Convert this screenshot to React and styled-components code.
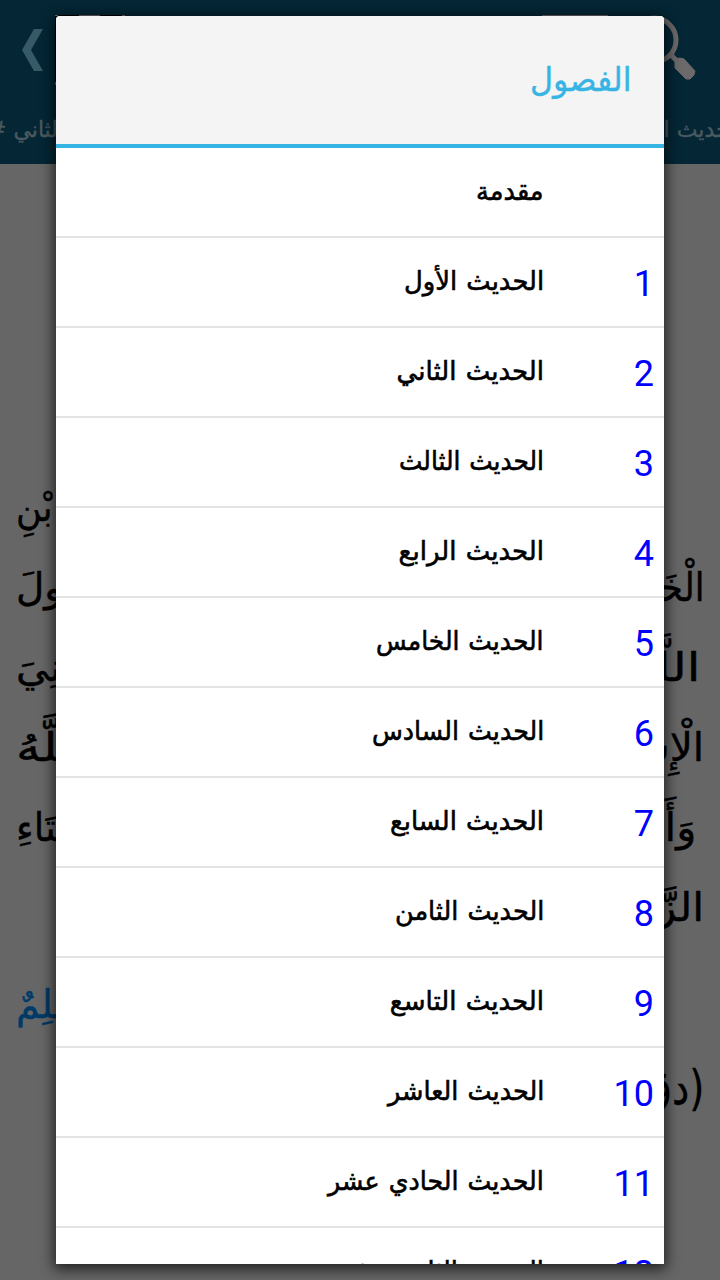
import React, {useLayoutEffect, useRef, useState} from 'react';
import styled, {createGlobalStyle} from 'styled-components';

const GlobalStyle = createGlobalStyle`
body {
  margin: 0;
  background: #666666;
  font-family: 'DejaVu Sans', sans-serif;
}
* {
  box-sizing: border-box;
}
`

const Screen = styled.div`
position: relative;
width: 720px;
height: 1280px;
overflow: hidden;
background: #666666;
`

const TopBar = styled.header`
height: 164px;
background: #042635;
display: flex;
flex-direction: column;
`

const Actions = styled.div`
height: 100px;
display: flex;
justify-content: space-between;
`

const Tabs = styled.div`
direction: rtl;
height: 64px;
display: flex;
justify-content: space-between;
align-items: center;
color: #4b5a60;
font-size: 22px;
-webkit-text-stroke: 0.4px #4b5a60;
white-space: nowrap;
margin: -3px -23px 0 -12px;
`

const Article = styled.main`
direction: rtl;
padding: 304px 16px 0;
display: flex;
flex-direction: column;
`

const Line = styled.p`
margin: ${p => p.$top || 0}px 0 0;
padding-right: ${p => p.$indent || 0}px;
height: 80px;
line-height: 80px;
font-size: ${p => p.$size || 39}px;
color: ${p => p.$color || '#000000'};
-webkit-text-stroke: 0.4px ${p => p.$color || '#000000'};
display: flex;
justify-content: space-between;
white-space: nowrap;
`

const Dialog = styled.section`
position: absolute;
top: 16px;
left: 56px;
width: 608px;
height: 1248px;
overflow: hidden;
border-radius: 4px 4px 0 0;
background: #ffffff;
box-shadow: 0 3px 14px 2px rgba(0, 0, 0, 0.7);
display: flex;
flex-direction: column;
direction: rtl;
`

const DialogHead = styled.div`
flex: none;
height: 132px;
padding: 0 32px 2px;
display: flex;
align-items: center;
background: #f4f4f4;
border-bottom: 4px solid #36b5e5;
color: #36b5e5;
font-size: 33px;
-webkit-text-stroke: 0.4px #36b5e5;
`

const List = styled.ul`
list-style: none;
margin: 0;
padding: 0;
`

const Row = styled.li`
height: 90px;
display: flex;
align-items: center;
border-bottom: 2px solid #e4e4e4;
`

const Num = styled.span`
width: 120px;
padding: 3px 10px 0 0;
font-family: Roboto, sans-serif;
font-size: 36px;
line-height: 42px;
color: #0000ff;
`

const Title = styled.span`
font-size: 26px;
line-height: 40px;
padding: 0 0 2px 0;
word-spacing: 1px;
color: #000000;
-webkit-text-stroke: 0.6px #000000;
`

const Fit = styled.span`
display: inline-block;
white-space: nowrap;
`

// squeezes a word horizontally to the given width
function FitText({width, left, children}) {
    const ref = useRef(null);
    const [scale, setScale] = useState(1);
    useLayoutEffect(() => {
        setScale(width / ref.current.offsetWidth);
    }, [width]);
    return (
        <Fit ref={ref} style={{transform: `scaleX(${scale})`, transformOrigin: left ? 'left center' : 'right center'}}>
            {children}
        </Fit>
    )
}

const chapters = [
    {title: 'مقدمة', width: 68},
    {title: 'الحديث الأول', width: 140},
    {title: 'الحديث الثاني', width: 147},
    {title: 'الحديث الثالث', width: 145},
    {title: 'الحديث الرابع', width: 145},
    {title: 'الحديث الخامس', width: 168},
    {title: 'الحديث السادس', width: 172},
    {title: 'الحديث السابع', width: 154},
    {title: 'الحديث الثامن', width: 149},
    {title: 'الحديث التاسع', width: 154},
    {title: 'الحديث العاشر', width: 156},
    {title: 'الحديث الحادي عشر', width: 216},
    {title: 'الحديث الثاني عشر', width: 206},
]

const lines = [
    {start: '', end: 'بْنِ', endWidth: 37},
    {start: 'الْخَطَّابِ', startWidth: 116, end: 'ولَ', endWidth: 47},
    {start: 'اللَّهِ', startWidth: 72, end: 'بُنِيَ', endWidth: 58, indent: 3},
    {start: 'الْإِسْلَامُ', startWidth: 118, end: 'اللَّهُ', endWidth: 72},
    {start: 'وَأَنَّ', startWidth: 62, end: 'وَإِيتَاءِ', endWidth: 80, indent: 8},
    {start: 'الزَّكَاةِ', startWidth: 104, end: ''},
    {start: '', end: 'وَمُسْلِمٌ', endWidth: 110, color: '#003a66', top: 17},
    {start: '(دق', startWidth: 62, end: '', top: 3, size: 48},
]

function Toolbar() {
    return (
        <TopBar>
            <Actions>
                <svg width="140" height="100">
                    <path d="M34 29H43L31 50L43 71H34L22 50Z" fill="#375a67" />
                    <path d="M55 15H125V85H55Z" fill="#000" />
                    <path d="M55 15.5H58M79 15.5H100M122 15.5H125M55.5 82V85" stroke="#6b6969" />
                </svg>
                <svg width="200" height="100">
                    <path d="M22 15.5H88" stroke="#6b6969" />
                    <circle cx="134" cy="40" r="22" fill="none" stroke="#6b6969" strokeWidth="5" />
                    <path d="M149 53L158 62" stroke="#6b6969" strokeWidth="5" />
                    <path d="M155 59L160 58L164 59L175 71L174 75L170 79L166 79L155 68Z" fill="#6b6969" stroke="#6b6969" strokeLinejoin="round" />
                </svg>
            </Actions>
            <Tabs>
                <span>الحديث الثالث</span>
                <span>الحديث الثاني #</span>
            </Tabs>
        </TopBar>
    )
}

function App() {
    return (
        <Screen>
            <GlobalStyle />
            <Toolbar />
            <Article>
                {lines.map((line, k) => (
                    <Line key={k} $color={line.color} $top={line.top} $indent={line.indent} $size={line.size}>
                        <span>{line.start && <FitText width={line.startWidth}>{line.start}</FitText>}</span>
                        <span>{line.end && <FitText left width={line.endWidth}>{line.end}</FitText>}</span>
                    </Line>
                ))}
            </Article>
            <Dialog>
                <DialogHead>
                    <FitText width={102}>الفصول</FitText>
                </DialogHead>
                <List>
                    {chapters.map((chapter, k) => (
                        <Row key={k}>
                            <Num>{k > 0 ? k : ''}</Num>
                            <Title>
                                <FitText width={chapter.width}>{chapter.title}</FitText>
                            </Title>
                        </Row>
                    ))}
                </List>
            </Dialog>
        </Screen>
    )
}

export default App;
